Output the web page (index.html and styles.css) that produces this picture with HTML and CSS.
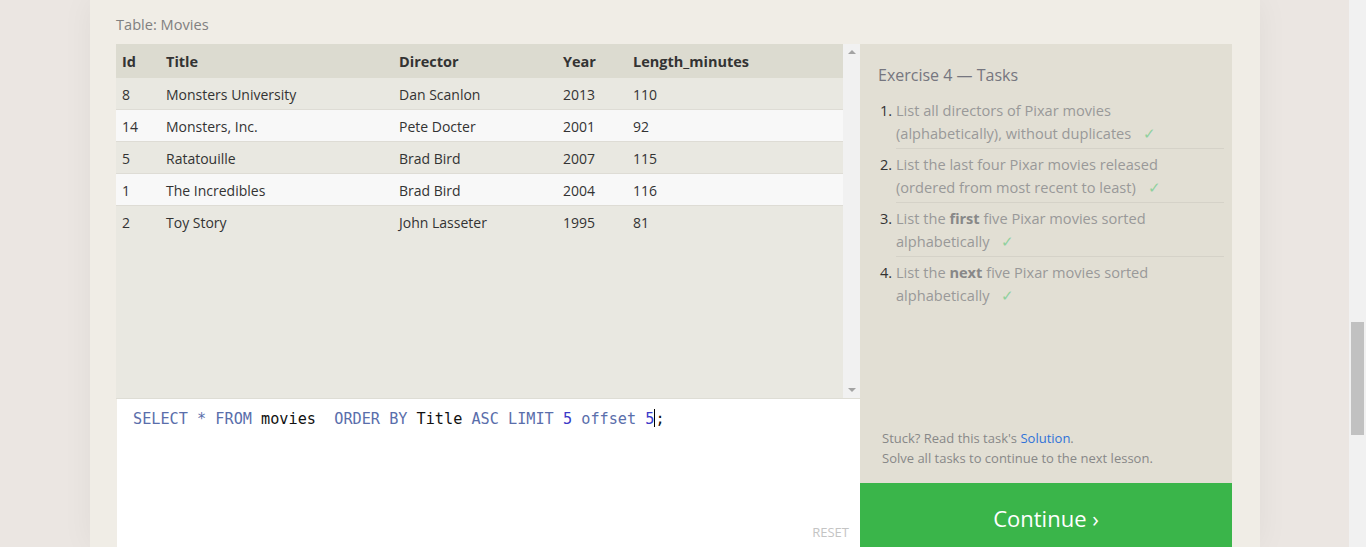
FILE: index.html
```html
<!DOCTYPE html>
<html>
<head>
<meta charset="utf-8">
<link rel="stylesheet" href="styles.css">
</head>
<body>
<div class="page">
  <div class="card">
    <div class="caption">Table: Movies</div>
    <div class="main">
      <div class="left">
        <div class="tablebox">
          <div class="tablescroll">
            <table class="results">
              <thead>
                <tr><th class="c-id">Id</th><th class="c-title">Title</th><th class="c-dir">Director</th><th class="c-year">Year</th><th>Length_minutes</th></tr>
              </thead>
              <tbody>
                <tr><td>8</td><td>Monsters University</td><td>Dan Scanlon</td><td>2013</td><td>110</td></tr>
                <tr class="alt"><td>14</td><td>Monsters, Inc.</td><td>Pete Docter</td><td>2001</td><td>92</td></tr>
                <tr><td>5</td><td>Ratatouille</td><td>Brad Bird</td><td>2007</td><td>115</td></tr>
                <tr class="alt"><td>1</td><td>The Incredibles</td><td>Brad Bird</td><td>2004</td><td>116</td></tr>
                <tr class="last"><td>2</td><td>Toy Story</td><td>John Lasseter</td><td>1995</td><td>81</td></tr>
              </tbody>
            </table>
          </div>
          <div class="vscroll">
            <span class="arrow up"></span>
            <span class="arrow down"></span>
          </div>
        </div>
        <div class="editor">
          <div class="code"><span class="kw">SELECT</span> <span class="kw">*</span> <span class="kw">FROM</span> <span class="id">movies</span>  <span class="kw">ORDER</span> <span class="kw">BY</span> <span class="id">Title</span> <span class="kw">ASC</span> <span class="kw">LIMIT</span> <span class="num">5</span> <span class="kw">offset</span> <span class="num">5</span><span class="cursor"></span><span class="id">;</span></div>
          <div class="reset">RESET</div>
        </div>
      </div>
      <div class="right">
        <div class="panel">
          <h2 class="ptitle">Exercise 4 — Tasks</h2>
          <ol class="tasks">
            <li>List all directors of Pixar movies (alphabetically), without duplicates <span class="check">✓</span></li>
            <li>List the last four Pixar movies released (ordered from most recent to least) <span class="check">✓</span></li>
            <li>List the <b>first</b> five Pixar movies sorted alphabetically <span class="check">✓</span></li>
            <li>List the <b>next</b> five Pixar movies sorted alphabetically <span class="check">✓</span></li>
          </ol>
          <div class="spacer"></div>
          <div class="help">
            <div>Stuck? Read this task's <a class="link">Solution</a>.</div>
            <div>Solve all tasks to continue to the next lesson.</div>
          </div>
        </div>
        <div class="continue">Continue ›</div>
      </div>
    </div>
  </div>
</div>
<div class="pagescroll"><div class="thumb"></div></div>
</body>
</html>
```
FILE: styles.css
```css
html, body {
  margin: 0;
  padding: 0;
  height: 100%;
  overflow: hidden;
}
body {
  background: #ebe6e2;
  font-family: "Open Sans", "Noto Sans", sans-serif;
  color: #333;
}
.page {
  display: flex;
  padding-left: 90px;
  height: 547px;
}
.card {
  width: 1170px;
  background: #f0ede6;
  box-shadow: 0 0 30px rgba(0,0,0,0.05);
  padding: 0 28px 0 26px;
  box-sizing: border-box;
  display: flex;
  flex-direction: column;
  overflow: hidden;
}
.caption {
  height: 44px;
  line-height: 48px;
  font-size: 14.6px;
  color: #808080;
  flex-shrink: 0;
}
.main {
  display: flex;
  flex: 1;
  min-height: 0;
}
.left {
  width: 744px;
  display: flex;
  flex-direction: column;
}
.tablebox {
  height: 355px;
  flex-shrink: 0;
  display: flex;
  background: #e9e8e1;
  border-bottom: 1px solid #deddd5;
  box-sizing: border-box;
}
.tablescroll {
  flex: 1;
}
.results {
  width: 100%;
  border-collapse: collapse;
  font-size: 14px;
}
.results th {
  background: #dcdbd0;
  text-align: left;
  font-weight: 700;
  height: 34px;
  padding: 0 0 0 6px;
  color: #333;
  font-size: 14.5px;
}
.results td {
  height: 29px;
  padding: 2px 0 0 6px;
  border-bottom: 1px solid #dedcd5;
  color: #333;
}
.results tr.last td {
  border-bottom: 0;
}
.results tr.alt td {
  background: #f8f8f8;
}
.c-id { width: 38px; }
.c-title { width: 227px; }
.c-dir { width: 158px; }
.c-year { width: 64px; }
.vscroll {
  width: 17px;
  background: #f1f1f1;
  display: flex;
  flex-direction: column;
  justify-content: space-between;
  align-items: center;
  padding: 6px 0;
  box-sizing: border-box;
}
.arrow {
  width: 0;
  height: 0;
  border-left: 4px solid transparent;
  border-right: 4px solid transparent;
}
.arrow.up { border-bottom: 4px solid #a3a3a3; }
.arrow.down { border-top: 4px solid #a3a3a3; }
.editor {
  flex: 1;
  background: #fff;
  margin-left: 1px;
  display: flex;
  flex-direction: column;
  justify-content: space-between;
  padding: 8px 11px 4px 16px;
}
.code {
  font-family: "DejaVu Sans Mono", monospace;
  font-size: 15.2px;
  line-height: 24px;
  white-space: pre;
  color: #000;
}
.kw { color: #5a6eab; }
.id { color: #111; }
.num { color: #3a3ac8; }
.cursor {
  display: inline-block;
  width: 1px;
  height: 18px;
  background: #000;
  vertical-align: -3px;
}
.reset {
  align-self: flex-end;
  font-size: 13px;
  color: #c4c4c4;
  margin-bottom: 2px;
}
.right {
  width: 372px;
  display: flex;
  flex-direction: column;
}
.panel {
  height: 439px;
  flex-shrink: 0;
  background: #e2dfd4;
  padding: 20px 8px 0 18px;
  box-sizing: border-box;
  display: flex;
  flex-direction: column;
}
.ptitle {
  margin: 0;
  font-weight: 400;
  font-size: 16px;
  color: #76767f;
  line-height: 22px;
}
.tasks {
  margin: 13px 0 0 0;
  padding: 0 0 0 18px;
  font-size: 14.6px;
  color: #999;
}
.tasks li {
  line-height: 23px;
  padding: 0 48px 3px 0;
  margin-bottom: 4px;
  border-bottom: 1px solid #d5d2c8;
}
.tasks li:last-child { border-bottom: 0; }
.tasks li::marker { color: #333; }
.tasks b { color: #888; }
.check {
  color: #8fd19e;
  margin-left: 8px;
}
.spacer { flex: 1; }
.help {
  font-size: 13px;
  color: #888;
  line-height: 20px;
  padding: 0 0 15px 4px;
}
.link { color: #2f72d8; }
.continue {
  flex-shrink: 0;
  background: #3ab54a;
  color: #fff;
  font-size: 22px;
  text-align: center;
  height: 72px;
  line-height: 70px;
}
.pagescroll {
  position: fixed;
  top: 0;
  right: 0;
  width: 17px;
  height: 547px;
  background: #f1f1f1;
}
.thumb {
  position: absolute;
  left: 2px;
  top: 322px;
  width: 13px;
  height: 113px;
  background: #c1c1c1;
}
```
